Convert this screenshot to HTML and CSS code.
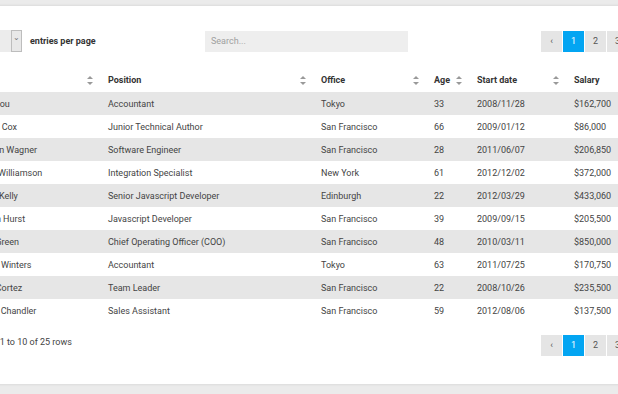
FILE: index.html
```
<!DOCTYPE html>
<html>
<head>
    <title>Employees</title>
    <meta http-equiv="Content-Type" content="text/html; charset=utf-8" />
    <link rel="stylesheet" href="styles.css">
</head>
<body>
<div class="card">
    <div class="top-bar">
        <div class="per-page">
            <div class="select"><span class="select-value">10</span><span class="select-arrow">&#8964;</span></div>
            <span class="per-page-label">entries per page</span>
        </div>
        <input class="search" placeholder="Search...">
        <div class="pager">
            <div class="page-btn">&lsaquo;</div>
            <div class="page-btn active">1</div>
            <div class="page-btn">2</div>
            <div class="page-btn">3</div>
            <div class="page-btn">&rsaquo;</div>
        </div>
    </div>

    <table class="grid">
        <colgroup>
            <col style="width:137px"><col style="width:213px"><col style="width:113px">
            <col style="width:43px"><col style="width:97px"><col style="width:84px">
        </colgroup>
        <thead>
            <tr>
                <th>Name<span class="sort"></span></th>
                <th>Position<span class="sort"></span></th>
                <th>Office<span class="sort"></span></th>
                <th>Age<span class="sort"></span></th>
                <th>Start date<span class="sort"></span></th>
                <th>Salary<span class="sort"></span></th>
            </tr>
        </thead>
        <tbody>
            <tr><td>Airi Satou</td><td>Accountant</td><td>Tokyo</td><td>33</td><td>2008/11/28</td><td>$162,700</td></tr>
            <tr><td>Ashton Cox</td><td>Junior Technical Author</td><td>San Francisco</td><td>66</td><td>2009/01/12</td><td>$86,000</td></tr>
            <tr><td>Brenden Wagner</td><td>Software Engineer</td><td>San Francisco</td><td>28</td><td>2011/06/07</td><td>$206,850</td></tr>
            <tr><td>Brielle Williamson</td><td>Integration Specialist</td><td>New York</td><td>61</td><td>2012/12/02</td><td>$372,000</td></tr>
            <tr><td>Cedric Kelly</td><td>Senior Javascript Developer</td><td>Edinburgh</td><td>22</td><td>2012/03/29</td><td>$433,060</td></tr>
            <tr><td>Colleen Hurst</td><td>Javascript Developer</td><td>San Francisco</td><td>39</td><td>2009/09/15</td><td>$205,500</td></tr>
            <tr><td>Fiona Green</td><td>Chief Operating Officer (COO)</td><td>San Francisco</td><td>48</td><td>2010/03/11</td><td>$850,000</td></tr>
            <tr><td>Garrett Winters</td><td>Accountant</td><td>Tokyo</td><td>63</td><td>2011/07/25</td><td>$170,750</td></tr>
            <tr><td>Gavin Cortez</td><td>Team Leader</td><td>San Francisco</td><td>22</td><td>2008/10/26</td><td>$235,500</td></tr>
            <tr><td>Herrod Chandler</td><td>Sales Assistant</td><td>San Francisco</td><td>59</td><td>2012/08/06</td><td>$137,500</td></tr>
        </tbody>
    </table>

    <div class="bottom-bar">
        <div class="info">Showing 1 to 10 of 25 rows</div>
        <div class="pager">
            <div class="page-btn">&lsaquo;</div>
            <div class="page-btn active">1</div>
            <div class="page-btn">2</div>
            <div class="page-btn">3</div>
            <div class="page-btn">&rsaquo;</div>
        </div>
    </div>
</div>
</body>
</html>
```
FILE: styles.css
```
html, body {margin: 0; height: 100%; overflow: hidden;}
body{
    background: #ebebeb;
    font-family: Roboto, "Liberation Sans", sans-serif;
    font-size: 9px;
    color: #444;
}
.card{
    width: 687px;
    margin: 6px 0 0 -57px;
    padding: 24px 20px 28px 20px;
    background: white;
    box-shadow: 0 0 3px rgba(0, 0, 0, 0.12);
}
.top-bar{
    display: grid;
    grid-template-columns: 1fr 203px 1fr;
    align-items: center;
    height: 22px;
}
.per-page{
    display: flex;
    align-items: center;
}
.select{
    display: flex;
    width: 59px;
    height: 22px;
    background: #ececec;
    justify-content: flex-end;
}
.select-value{
    flex: 1;
    line-height: 22px;
    padding-left: 8px;
}
.select-arrow{
    width: 9px;
    border: 1px solid #bdbdbd;
    background: #e8e8e8;
    color: #777;
    font-size: 8px;
    line-height: 14px;
    text-align: center;
}
.per-page-label{
    margin-left: 8px;
    font-weight: bold;
    color: #333;
}
.search{
    height: 21px;
    box-sizing: border-box;
    border: none;
    background: #eeeeee;
    padding: 0 6px;
    font-family: Roboto, "Liberation Sans", sans-serif;
    font-size: 9px;
    color: #444;
    outline: none;
}
.search::placeholder{
    color: #a0a0a0;
}
.pager{
    display: flex;
    justify-content: flex-end;
    gap: 1px;
}
.page-btn{
    width: 21px;
    height: 21px;
    line-height: 21px;
    text-align: center;
    background: #e5e5e5;
    color: #555;
}
.page-btn.active{
    background: #03a5f2;
    color: white;
}
.grid{
    width: 687px;
    table-layout: fixed;
    border-collapse: collapse;
    margin-top: 16px;
}
.grid th{
    position: relative;
    height: 24px;
    padding: 0 8px;
    text-align: left;
    font-weight: bold;
    color: #333;
}
.grid td{
    height: 23px;
    padding: 0 8px;
    white-space: nowrap;
    overflow: hidden;
}
.grid tbody tr:nth-child(odd){
    background: #e6e6e6;
}
.sort{
    position: absolute;
    right: 7px;
    top: 8px;
    width: 6px;
    height: 9px;
}
.sort:before, .sort:after{
    content: "";
    position: absolute;
    left: 0;
    border-left: 3px solid transparent;
    border-right: 3px solid transparent;
}
.sort:before{
    top: 0;
    border-bottom: 3px solid #999;
}
.sort:after{
    bottom: 0;
    border-top: 3px solid #999;
}
.bottom-bar{
    display: flex;
    justify-content: space-between;
    align-items: center;
    margin-top: 13px;
}
.info{
    margin-top: -8px;
}
```
